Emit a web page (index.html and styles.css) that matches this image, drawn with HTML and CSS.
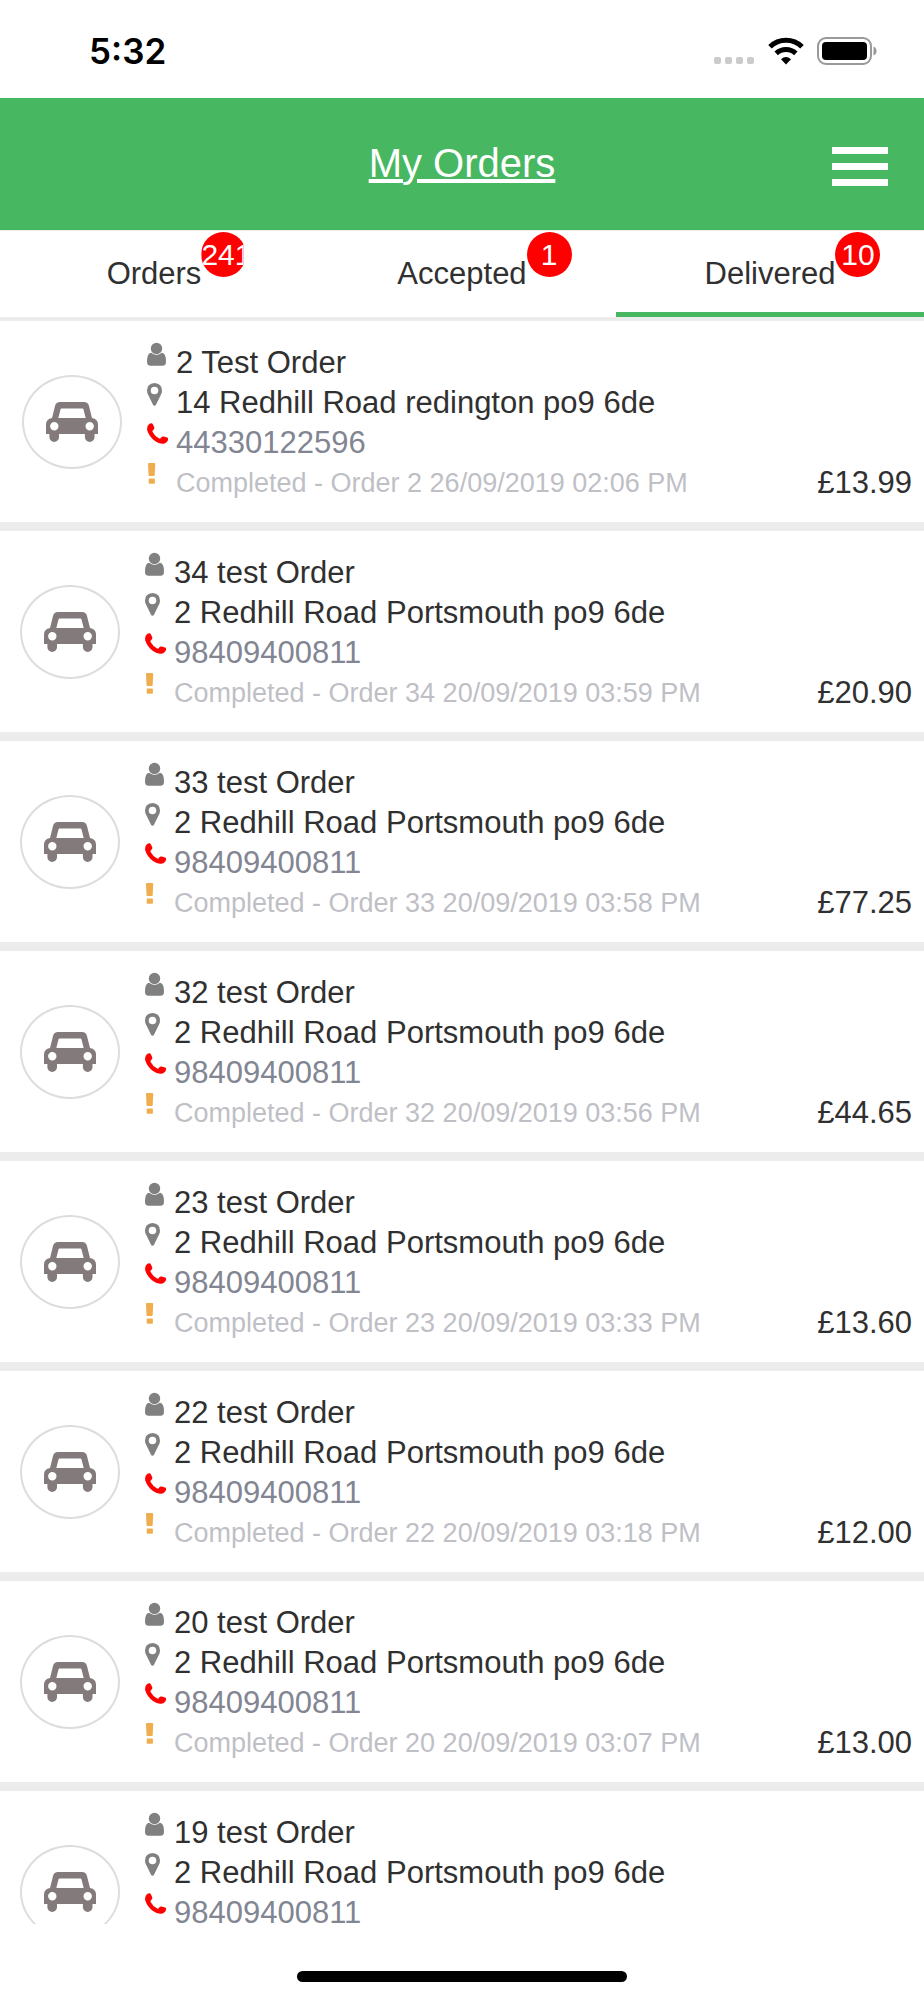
FILE: index.html
```html
<!DOCTYPE html>
<html lang="en">
<head>
  <meta charset="UTF-8">
  <meta name="viewport" content="width=device-width, initial-scale=1.0">
  <title>My Orders</title>
  <link rel="stylesheet" href="styles.css">
</head>
<body>
  <!-- icons used by the order rows -->
  <svg class="sprite" aria-hidden="true">
    <symbol id="car" viewBox="0 0 52 40">
      <path fill-rule="evenodd" d="M14 0h24q4 0 5 4L46 16Q52 17 52 22.500V32H48.500v3.200a4.800 4.800 0 0 1-9.600 0V32H13v3.200a4.800 4.800 0 0 1-9.600 0V32H0V22.500Q0 17 6 16L9 4Q10 0 14 0zM15.500 6.500q-.8 0-1 1L12.300 16h27.400L37.500 7.500q-.2-1-1-1zM8.300 20a4.200 4.200 0 1 0 0 8.400 4.200 4.200 0 0 0 0-8.400zM43.700 20a4.200 4.200 0 1 0 0 8.400 4.200 4.200 0 0 0 0-8.400z"/>
    </symbol>
    <symbol id="user" viewBox="0 0 22 24">
      <circle cx="9.500" cy="6.500" r="5.700"/>
      <path d="M4 10.800q5.500 4.200 11 0Q19 11.500 19 19.500q0 4.300-3.500 4.300h-12Q0 23.800 0 19.500q0-8 4-8.700z"/>
    </symbol>
    <symbol id="pin" viewBox="0 0 22 24">
      <path fill-rule="evenodd" d="M7.500 1Q15 1.500 15 8.500q0 2-1 4L9 22.800q-.5 1-1.500 1t-1.500-1L1 12.500q-1-2-1-4Q0 1.500 7.500 1zm0 3.700a3.800 3.800 0 1 0 0 7.600 3.800 3.800 0 0 0 0-7.600z"/>
    </symbol>
    <symbol id="phone" viewBox="0 0 22 24">
      <path d="M2.500 1.800Q5 .6 6 2.500l1.200 2.700q.6 1.500-.7 2.500-1.500 1-.9 2.200 2.400 4.400 6.600 6.700 1.300.4 1.800-.8 1-1.800 2.600-1.300l3.500 1q1.400.6.9 2.400-.8 2.800-4.500 3.800-3.500.8-8.500-2.700Q2 14.500.3 8.500-.6 3.700 2.500 1.800z"/>
    </symbol>
    <symbol id="bang" viewBox="0 0 22 24">
      <path d="M2 1h5.200q1 0 1 1L7.700 13q0 1-1 1H2.500q-1 0-1-1L1 2q0-1 1-1zM2.500 16.500h4.600q.8 0 .8.800v3.600q0 .8-.8.800H2.500q-.8 0-.8-.8v-3.600q0-.8.8-.8z"/>
    </symbol>
  </svg>

  <div class="app">
    <div class="status-bar">
      <span class="time">5:32</span>
      <div class="status-icons">
        <svg width="42" height="28" viewBox="0 0 42 28" fill="#cbcbcb">
          <rect x="1" y="20" width="7" height="7" rx="2"/>
          <rect x="12" y="20" width="7" height="7" rx="2"/>
          <rect x="23" y="20" width="7" height="7" rx="2"/>
          <rect x="34" y="20" width="7" height="7" rx="2"/>
        </svg>
        <svg width="36" height="28" viewBox="0 0 36 28">
          <path d="M2 9.800a23 23 0 0 1 32 0M8.200 16.400a14.200 14.200 0 0 1 19.600 0" fill="none" stroke="#000" stroke-width="5"/>
          <path d="M18 27.500l-5-5.200q5-4.600 10 0z"/>
        </svg>
        <svg width="60" height="28" viewBox="0 0 60 28">
          <rect x="1" y="1" width="53" height="26" rx="8" fill="none" stroke="#999" stroke-width="2"/>
          <rect x="5" y="5" width="45" height="18" rx="4"/>
          <path d="M56.500 9.500q3 1 3 4.500t-3 4.500z" fill="#999"/>
        </svg>
      </div>
    </div>

    <header class="header">
      <h1>My Orders</h1>
      <button type="button" class="menu" aria-label="Menu"><span></span><span></span><span></span></button>
    </header>

    <nav class="tabs">
      <button type="button" class="tab"><span class="tab-label">Orders<span class="badge badge-cut">241</span></span></button>
      <button type="button" class="tab"><span class="tab-label">Accepted<span class="badge">1</span></span></button>
      <button type="button" class="tab active"><span class="tab-label">Delivered<span class="badge">10</span></span></button>
    </nav>

    <ul class="orders">
      <li class="order newest">
        <div class="avatar"><svg class="car"><use href="#car"/></svg></div>
        <div class="details">
          <div class="line"><svg class="icon"><use href="#user"/></svg>2 Test Order</div>
          <div class="line"><svg class="icon"><use href="#pin"/></svg>14 Redhill Road redington po9 6de</div>
          <div class="line"><svg class="icon red"><use href="#phone"/></svg><a href="tel:44330122596">44330122596</a></div>
          <div class="line state"><svg class="icon orange"><use href="#bang"/></svg>Completed - Order 2 26/09/2019 02:06 PM</div>
        </div>
        <div class="price">£13.99</div>
      </li>
      <li class="order">
        <div class="avatar"><svg class="car"><use href="#car"/></svg></div>
        <div class="details">
          <div class="line"><svg class="icon"><use href="#user"/></svg>34 test Order</div>
          <div class="line"><svg class="icon"><use href="#pin"/></svg>2 Redhill Road Portsmouth po9 6de</div>
          <div class="line"><svg class="icon red"><use href="#phone"/></svg><a href="tel:98409400811">98409400811</a></div>
          <div class="line state"><svg class="icon orange"><use href="#bang"/></svg>Completed - Order 34 20/09/2019 03:59 PM</div>
        </div>
        <div class="price">£20.90</div>
      </li>
      <li class="order">
        <div class="avatar"><svg class="car"><use href="#car"/></svg></div>
        <div class="details">
          <div class="line"><svg class="icon"><use href="#user"/></svg>33 test Order</div>
          <div class="line"><svg class="icon"><use href="#pin"/></svg>2 Redhill Road Portsmouth po9 6de</div>
          <div class="line"><svg class="icon red"><use href="#phone"/></svg><a href="tel:98409400811">98409400811</a></div>
          <div class="line state"><svg class="icon orange"><use href="#bang"/></svg>Completed - Order 33 20/09/2019 03:58 PM</div>
        </div>
        <div class="price">£77.25</div>
      </li>
      <li class="order">
        <div class="avatar"><svg class="car"><use href="#car"/></svg></div>
        <div class="details">
          <div class="line"><svg class="icon"><use href="#user"/></svg>32 test Order</div>
          <div class="line"><svg class="icon"><use href="#pin"/></svg>2 Redhill Road Portsmouth po9 6de</div>
          <div class="line"><svg class="icon red"><use href="#phone"/></svg><a href="tel:98409400811">98409400811</a></div>
          <div class="line state"><svg class="icon orange"><use href="#bang"/></svg>Completed - Order 32 20/09/2019 03:56 PM</div>
        </div>
        <div class="price">£44.65</div>
      </li>
      <li class="order">
        <div class="avatar"><svg class="car"><use href="#car"/></svg></div>
        <div class="details">
          <div class="line"><svg class="icon"><use href="#user"/></svg>23 test Order</div>
          <div class="line"><svg class="icon"><use href="#pin"/></svg>2 Redhill Road Portsmouth po9 6de</div>
          <div class="line"><svg class="icon red"><use href="#phone"/></svg><a href="tel:98409400811">98409400811</a></div>
          <div class="line state"><svg class="icon orange"><use href="#bang"/></svg>Completed - Order 23 20/09/2019 03:33 PM</div>
        </div>
        <div class="price">£13.60</div>
      </li>
      <li class="order">
        <div class="avatar"><svg class="car"><use href="#car"/></svg></div>
        <div class="details">
          <div class="line"><svg class="icon"><use href="#user"/></svg>22 test Order</div>
          <div class="line"><svg class="icon"><use href="#pin"/></svg>2 Redhill Road Portsmouth po9 6de</div>
          <div class="line"><svg class="icon red"><use href="#phone"/></svg><a href="tel:98409400811">98409400811</a></div>
          <div class="line state"><svg class="icon orange"><use href="#bang"/></svg>Completed - Order 22 20/09/2019 03:18 PM</div>
        </div>
        <div class="price">£12.00</div>
      </li>
      <li class="order">
        <div class="avatar"><svg class="car"><use href="#car"/></svg></div>
        <div class="details">
          <div class="line"><svg class="icon"><use href="#user"/></svg>20 test Order</div>
          <div class="line"><svg class="icon"><use href="#pin"/></svg>2 Redhill Road Portsmouth po9 6de</div>
          <div class="line"><svg class="icon red"><use href="#phone"/></svg><a href="tel:98409400811">98409400811</a></div>
          <div class="line state"><svg class="icon orange"><use href="#bang"/></svg>Completed - Order 20 20/09/2019 03:07 PM</div>
        </div>
        <div class="price">£13.00</div>
      </li>
      <li class="order">
        <div class="avatar"><svg class="car"><use href="#car"/></svg></div>
        <div class="details">
          <div class="line"><svg class="icon"><use href="#user"/></svg>19 test Order</div>
          <div class="line"><svg class="icon"><use href="#pin"/></svg>2 Redhill Road Portsmouth po9 6de</div>
          <div class="line"><svg class="icon red"><use href="#phone"/></svg><a href="tel:98409400811">98409400811</a></div>
        </div>
      </li>
    </ul>

    <footer class="home-bar"><span></span></footer>
  </div>
</body>
</html>
```

FILE: styles.css
```css
* {
  box-sizing: border-box;
}

body {
  margin: 0;
  background-color: #fff;
  color: #303030;
  font-family: "Liberation Sans", Helvetica, Arial, sans-serif;
  font-size: 31px;
}

button {
  padding: 0;
  border: none;
  background: none;
  color: inherit;
  font: inherit;
  cursor: pointer;
}

.sprite {
  display: none;
}

.app {
  display: flex;
  flex-direction: column;
  height: 100vh;
}

/* status bar */
.status-bar {
  display: flex;
  flex: none;
  align-items: center;
  justify-content: space-between;
  height: 98px;
  padding: 4px 47px 0 89px;
}

.time {
  color: #000;
  font-family: Inter, sans-serif;
  font-size: 35px;
  font-weight: 600;
}

.status-icons {
  display: flex;
  gap: 13px;
}

/* green header */
.header {
  display: grid;
  grid-template-columns: 1fr auto 1fr;
  flex: none;
  align-items: center;
  height: 132px;
  padding: 0 36px;
  background-color: #48b762;
}

.header h1 {
  grid-column: 2;
  margin: 0;
  padding-bottom: 2px;
  color: #fff;
  font-size: 40px;
  font-weight: normal;
  text-decoration: underline;
}

.menu {
  display: flex;
  flex-direction: column;
  justify-self: end;
  gap: 9px;
  width: 56px;
  padding-top: 5px;
}

.menu span {
  height: 7px;
  background-color: #fff;
}

/* tabs */
.tabs {
  display: flex;
  flex: none;
  height: 91px;
  border-top: 1px solid #ececec;
  border-bottom: 4px solid #ececec;
}

.tab {
  flex: 1;
  border-top: 5px solid transparent;
  border-bottom: 5px solid transparent;
}

.tab.active {
  border-bottom-color: #48b762;
}

.tab-label {
  position: relative;
}

.badge {
  position: absolute;
  bottom: 14px;
  left: 100%;
  width: 45px;
  height: 45px;
  border-radius: 50%;
  background-color: #f00;
  color: #fff;
  font-size: 30px;
  line-height: 45px;
  text-align: center;
  overflow: hidden;
}

.badge-cut {
  text-align: left;
  clip-path: inset(0 3px 0 0);
}

/* order list */
.orders {
  flex: 1;
  min-height: 0;
  margin: 0;
  padding: 0;
  list-style: none;
  overflow: hidden;
}

.order {
  display: flex;
  align-items: center;
  height: 210px;
  padding: 21px 12px 20px 20px;
  border-bottom: 9px solid #ececec;
}

.order.newest {
  padding-left: 22px;
}

.avatar {
  display: flex;
  flex: none;
  align-items: center;
  justify-content: center;
  width: 100px;
  height: 94px;
  border: 2px solid #ddd;
  border-radius: 50%;
}

.car {
  width: 52px;
  height: 40px;
  fill: #837b7b;
}

.details {
  flex: 1;
  align-self: flex-start;
  padding: 1px 0 0 25px;
}

.line {
  display: flex;
  line-height: 40px;
}

.line a {
  color: #828592;
  text-decoration: none;
}

.state {
  color: #bfbfc6;
  font-size: 27px;
}

.icon {
  flex: none;
  width: 22px;
  height: 24px;
  margin: -1px 7px 0 0;
  fill: #808080;
}

.icon.red {
  fill: #f00;
}

.icon.orange {
  fill: #f0ad4e;
}

.price {
  align-self: flex-end;
  line-height: 38px;
}

/* home indicator */
.home-bar {
  display: flex;
  flex: none;
  align-items: flex-end;
  justify-content: center;
  height: 76px;
  padding-bottom: 18px;
}

.home-bar span {
  width: 330px;
  height: 11px;
  border-radius: 6px;
  background-color: #000;
}
```
